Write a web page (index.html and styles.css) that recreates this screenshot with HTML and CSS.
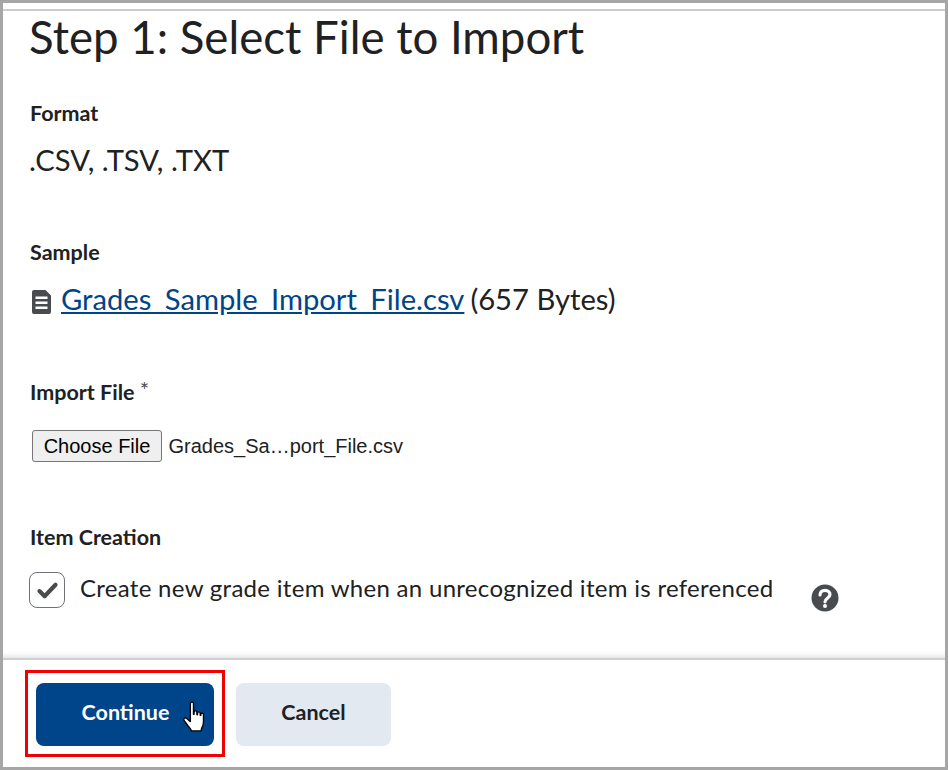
FILE: index.html
```html
<!DOCTYPE html>
<html lang="en">
<head>
  <meta charset="UTF-8" />
  <title>Import Grades</title>
  <link rel="stylesheet" href="styles.css">
</head>
<body>

<div class="frame">
  <div class="top-line"></div>

  <main class="content">
    <h1>Step 1: Select File to Import</h1>

    <section class="field-format">
      <div class="label">Format</div>
      <div class="value">.CSV, .TSV, .TXT</div>
    </section>

    <section class="field-sample">
      <div class="label">Sample</div>
      <div class="value sample-row">
        <svg class="file-icon" viewBox="0 0 19 24" width="19" height="24">
          <path fill="#494c4e" fill-rule="evenodd" d="M2 0h11.500l5.500 5.500v16.500a2 2 0 0 1-2 2h-15a2 2 0 0 1-2-2v-20a2 2 0 0 1 2-2z M3.500 6.500v2.500h12v-2.500z M3.500 11.500v2.500h12v-2.500z M3.500 16.500v2.500h12v-2.500z"/>
        </svg>
        <a href="#">Grades_Sample_Import_File.csv</a>
        <span class="size">(657 Bytes)</span>
      </div>
    </section>

    <section class="field-import">
      <div class="label">Import File <span class="required">*</span></div>
      <div class="file-picker">
        <button class="choose-btn">Choose File</button>
        <span class="file-name">Grades_Sa…port_File.csv</span>
      </div>
    </section>

    <section class="field-item">
      <div class="label">Item Creation</div>
      <div class="check-row">
        <span class="checkbox">
          <svg viewBox="0 0 20 20" width="23" height="23">
            <path fill="none" stroke="#494c4e" stroke-width="3.600" stroke-linecap="round" stroke-linejoin="round" d="M3 10.500l4.500 4.500 9.500-10"/>
          </svg>
        </span>
        <span class="check-text">Create new grade item when an unrecognized item is referenced</span>
        <svg class="help-icon" viewBox="0 0 28 28" width="28" height="28">
          <circle cx="14" cy="14" r="13.500" fill="#494c4e"/>
          <path fill="none" stroke="#fff" stroke-width="3.200" stroke-linecap="round" d="M9 11c0-3 2.200-4.700 5-4.700s5 1.700 5 4.300c0 3.700-5 3.600-5 7.200"/>
          <circle cx="14" cy="22" r="2" fill="#fff"/>
        </svg>
      </div>
    </section>
  </main>

  <footer class="actions">
    <div class="highlight">
      <button class="btn btn-primary">Continue</button>
      <svg class="pointer" viewBox="0 0 24 32" width="25" height="33">
        <path fill="#fff" stroke="#000" stroke-width="1.300" stroke-linejoin="round" d="M8 2.500c0-2 3-2 3 0v10.500l.6-.1v-2c0-1.700 2.700-1.700 2.700 0v2.300l.6.100v-1.500c0-1.700 2.600-1.700 2.600 0v2l.6.200v-1c0-1.600 2.600-1.600 2.600 0v7c0 3-.6 4.300-1.600 6-.5 1-.6 2-.6 3h-9.500c-.4-2-1.700-3-3-4.500l-4-5.500c-1.400-2 1-3.500 2.600-2l3.400 3z"/>
      </svg>
    </div>
    <button class="btn btn-secondary">Cancel</button>
  </footer>
</div>

</body>
</html>
```

FILE: styles.css
```css
* {
  box-sizing: border-box;
}

body {
  margin: 0;
  font-family: Lato, sans-serif;
  color: #202122;
  background: white;
}

.frame {
  width: 948px;
  height: 770px;
  border: 3px solid #a6a6a6;
  display: flex;
  flex-direction: column;
  overflow: hidden;
}

.top-line {
  height: 2px;
  margin-top: 6px;
  background-color: #cdcdcd;
}

.content {
  flex: 1;
  padding: 0 27px;
  border-bottom: 2px solid #cdd1d4;
  box-shadow: inset 0 -6px 5px -4px rgba(0,0,0,0.12);
}

h1 {
  margin: 0 0 0 -1px;
  padding-top: 1px;
  font-size: 45.6px;
  font-weight: 400;
  line-height: 50px;
}

.field-format { padding-top: 38px; }
.field-sample { padding-top: 62px; }
.field-import { padding-top: 63px; }
.field-item { padding-top: 62px; }

.label {
  font-size: 21.5px;
  font-weight: 700;
  line-height: 26px;
}

.required {
  font-weight: 400;
  font-size: 22px;
  color: #494c4e;
  position: relative;
  top: -2px;
}

.value {
  margin-top: 17px;
  margin-left: -1px;
  font-size: 29.2px;
  line-height: 34px;
}

.sample-row {
  display: flex;
  align-items: center;
  margin-left: 0;
}

.file-icon {
  margin-left: 2px;
  margin-right: 10px;
  margin-top: 5px;
}

.sample-row a {
  color: #004489;
  text-decoration: underline;
}

.size {
  margin-left: 6px;
}

.file-picker {
  display: flex;
  align-items: center;
  margin-top: 25px;
  margin-left: 2px;
  font-family: "Liberation Sans", Arial, sans-serif;
  font-size: 20px;
}

.choose-btn {
  width: 130px;
  height: 32px;
  padding: 0;
  font-family: inherit;
  font-size: 20px;
  color: black;
  background-color: #efefef;
  border: 1px solid #767676;
  border-radius: 3px;
}

.file-name {
  margin-left: 6.5px;
  color: #202122;
}

.check-row {
  display: flex;
  align-items: flex-start;
  margin-top: 22px;
  margin-left: -1px;
}

.checkbox {
  display: flex;
  align-items: center;
  justify-content: center;
  width: 36px;
  height: 36px;
  border: 1px solid #6e7477;
  border-radius: 8px;
  flex-shrink: 0;
}

.check-text {
  margin-left: 15px;
  font-size: 24px;
  line-height: 32px;
  letter-spacing: 0.3px;
}

.help-icon {
  margin-left: 37.5px;
  margin-top: 12px;
}

.actions {
  height: 107px;
  display: flex;
  align-items: center;
  padding-left: 22px;
}

.highlight {
  position: relative;
  width: 200px;
  height: 87px;
  padding-top: 2px;
  border: 3px solid #f00000;
  display: flex;
  align-items: center;
  justify-content: center;
}

.btn {
  height: 63px;
  padding-bottom: 6px;
  border: none;
  border-radius: 8px;
  font-family: Lato, sans-serif;
  font-size: 21.5px;
  font-weight: 700;
}

.btn-primary {
  width: 178px;
  margin-right: 1px;
  color: white;
  background-color: #004489;
  padding-right: 4px;
}

.btn-secondary {
  width: 155px;
  margin-left: 11px;
  margin-top: 2px;
  color: #202122;
  background-color: #e3e9f1;
}

.pointer {
  position: absolute;
  left: 154px;
  top: 28px;
}
```
